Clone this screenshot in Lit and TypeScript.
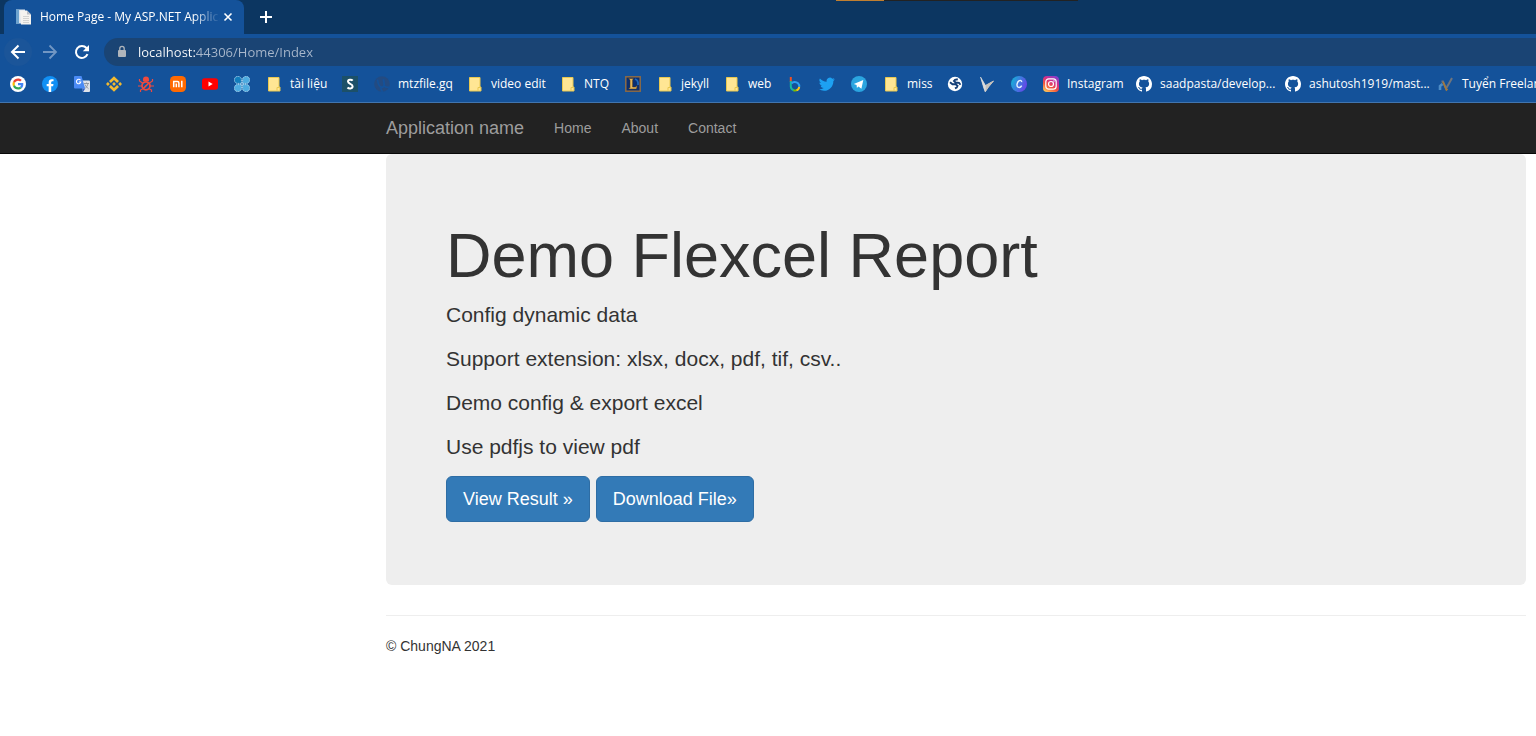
import { LitElement, html, css, svg, nothing, type TemplateResult } from "lit";
import { customElement } from "lit/decorators.js";
import { styleMap } from "lit/directives/style-map.js";

const icon = (body: TemplateResult, box = "0 0 16 16") =>
  html`<svg class="icon" viewBox=${box} aria-hidden="true">${body}</svg>`;

const folder = icon(svg`
  <path d="M2.500 1.500h10.500v9.500h1v4H2.500z" fill="#ffe694" stroke="#e9c850"/>
  <path d="M11 14.500v-3h2.500" fill="none" stroke="#e9c850"/>`);

const github = icon(svg`<path fill="#fff" fill-rule="evenodd" d="M8 0C3.580 0 0 3.580 0 8c0 3.540 2.290 6.530 5.470 7.590.4.070.55-.17.55-.38 0-.19-.01-.82-.01-1.490-2.010.37-2.530-.49-2.690-.94-.09-.23-.48-.94-.82-1.130-.28-.15-.68-.52-.01-.53.63-.01 1.080.58 1.230.82.72 1.210 1.870.87 2.330.66.070-.52.28-.87.51-1.070-1.780-.2-3.640-.89-3.640-3.950 0-.87.31-1.590.82-2.150-.08-.2-.36-1.020.08-2.120 0 0 .67-.21 2.200.82.64-.18 1.320-.27 2-.27s1.360.09 2 .27c1.530-1.040 2.200-.82 2.200-.82.44 1.100.16 1.920.08 2.120.51.56.82 1.270.82 2.150 0 3.070-1.870 3.750-3.650 3.950.29.25.54.73.54 1.480 0 1.070-.01 1.930-.01 2.200 0 .21.15.46.55.38A8.010 8.010 0 0 0 16 8c0-4.420-3.580-8-8-8z"/>`);

const google = icon(svg`
  <circle cx="24" cy="24" r="24" fill="#fff"/>
  <g transform="translate(7.500 7.500) scale(.69)">
    <path fill="#EA4335" d="M24 9.500c3.540 0 6.710 1.220 9.210 3.600l6.850-6.850C35.900 2.380 30.470 0 24 0 14.620 0 6.510 5.380 2.560 13.220l7.980 6.190C12.430 13.720 17.740 9.500 24 9.500z"/>
    <path fill="#4285F4" d="M46.980 24.550c0-1.570-.15-3.090-.38-4.550H24v9.020h12.940c-.58 2.960-2.260 5.480-4.780 7.180l7.730 6c4.510-4.180 7.090-10.360 7.090-17.650z"/>
    <path fill="#FBBC05" d="M10.530 28.590c-.48-1.450-.76-2.990-.76-4.590s.27-3.140.76-4.590l-7.980-6.190C.92 16.460 0 20.120 0 24s.92 7.540 2.560 10.780z"/>
    <path fill="#34A853" d="M24 48c6.480 0 11.930-2.130 15.890-5.810l-7.730-6c-2.150 1.450-4.920 2.300-8.160 2.300-6.260 0-11.570-4.220-13.470-9.910l-7.980 6.190C6.510 42.620 14.620 48 24 48z"/>
  </g>`, "0 0 48 48");

const facebook = icon(svg`
  <circle cx="12" cy="12" r="12" fill="#1190f5"/>
  <path fill="#fff" d="M16.700 15.500l.5-3.500h-3.400V9.800c0-.9.500-1.900 2-1.900h1.500v-3s-1.400-.2-2.700-.2c-2.800 0-4.600 1.700-4.600 4.700V12H7v3.500h3V24h3.800v-8.500z"/>`, "0 0 24 24");

const translate = icon(svg`
  <path d="M6.500 4.500H15a1 1 0 0 1 1 1V15a1 1 0 0 1-1 1H9z" fill="#dfe3ea"/>
  <path d="M1 0h6.500l3.700 12.500H1a1 1 0 0 1-1-1V1a1 1 0 0 1 1-1z" fill="#4b8bf5"/>
  <path d="M8 12.500h3.200L9.200 16z" fill="#2f5fc4"/>
  <path d="M6.500 4.300A2.200 2.200 0 1 0 6.800 6H4.800" fill="none" stroke="#fff" stroke-width="1.100"/>
  <path d="M10 7.500h5M12.500 6.500v1M14 7.500c-.4 2-1.600 3.800-3 5M11 8.500c.8 1.900 2 3.200 3.500 4.200" fill="none" stroke="#8b929b" stroke-width=".9"/>`);

const binance = icon(svg`<g fill="#f3ba2f">
  <path d="M8 .2l5 4.900-1.900 1.900L8 3.900 4.900 7 3 5.100z"/>
  <path d="M8 15.800l5-4.900-1.900-1.900L8 12.100 4.900 9 3 10.900z"/>
  <path d="M8 6.100L9.900 8 8 9.900 6.100 8zM1.900 6.100L3.800 8 1.900 9.900 0 8zM14.100 6.100L16 8l-1.900 1.900L12.200 8z"/></g>`);

const bug = icon(svg`
  <path d="M5 3.500a3 3 0 0 1 6 0V5H5z" fill="#f04a3e"/>
  <circle cx="8" cy="9.800" r="4" fill="none" stroke="#f04a3e" stroke-width="1.700"/>
  <path d="M5.200 12.600l5.600-5.600" stroke="#f04a3e" stroke-width="1.700"/>
  <path d="M4.500 7L1.500 5V3M11.500 7l3-2V3M4 10H0M12 10h4M4.800 12.700L2.500 14v2M11.200 12.700l2.300 1.300v2" fill="none" stroke="#f04a3e" stroke-width="1.200"/>`);

const xiaomi = icon(svg`
  <rect width="16" height="16" rx="4.500" fill="#ff6900"/>
  <path d="M3.700 11.300V5.500h3.800a1.400 1.400 0 0 1 1.400 1.400v4.400M6.300 7.500v3.800M11.800 4.800v6.500" fill="none" stroke="#fff" stroke-width="1.500"/>`);

const youtube = icon(svg`
  <rect y="2.300" width="16" height="11.400" rx="2.600" fill="#f00"/>
  <path d="M6.500 5.500v5l4.200-2.500z" fill="#fff"/>`);

const clover = icon(svg`<g stroke="#b9e2f7" stroke-width=".8" stroke-dasharray="1.500 .5">
  <path d="M7.400 7.400H3.500a3 3 0 0 1-3-3V3.500a3 3 0 0 1 3-3h1a3 3 0 0 1 2.900 3z" fill="#117cbc"/>
  <path d="M8.600 7.400h3.900a3 3 0 0 0 3-3V3.500a3 3 0 0 0-3-3h-1a3 3 0 0 0-2.900 3z" fill="#4dabe0"/>
  <path d="M7.400 8.600H3.500a3 3 0 0 0-3 3v.9a3 3 0 0 0 3 3h1a3 3 0 0 0 2.900-3z" fill="#4dabe0"/>
  <path d="M8.600 8.600h3.900a3 3 0 0 1 3 3v.9a3 3 0 0 1-3 3h-1a3 3 0 0 1-2.900-3z" fill="#4dabe0"/></g>`);

const sBadge = icon(svg`
  <rect width="16" height="16" fill="#1c5068"/>
  <path d="M10.700 4.700C9.600 3.400 6 3.300 6 5.600c0 2.400 4.600 2 4.600 4.700 0 2.700-3.800 2.600-5.100 1.200" fill="none" stroke="#fff" stroke-width="2"/>`);

const torrent = icon(svg`
  <circle cx="8" cy="8" r="7.800" fill="#234b82"/>
  <path d="M3.500 3.500c.5 4.500 1.700 7.700 4.500 7.700 2.600 0 2.500-3.500 1.300-8M10.500 10.200c1.200 1.200 2.500 1.500 4.500.8M6.500 11.500c.5 1.500 1 3 2 4.500" fill="none" stroke="#14529a" stroke-width="1.800"/>`);

const league = icon(svg`
  <rect x=".8" y=".8" width="14.400" height="14.400" fill="#092f73" stroke="#8d6b46" stroke-width="1.500"/>
  <path d="M10 3c2.500 1 3.400 3 3 6" fill="none" stroke="#1c67bd" stroke-width="1.800"/>
  <path d="M3.500 2.500h5L7.600 4v7h2.800l1.800-1.500-.7 3.500H3.500L5 11.500V4z" fill="#e3b75b" stroke="#4f3515" stroke-width=".5"/>`);

const bing = icon(svg`<g fill="none" stroke-width="2">
  <path d="M3.800 1v5" stroke="#f25022"/>
  <path d="M3.800 5v5.500a4.200 4.200 0 0 0 3 3.800" stroke="#18b6a0"/>
  <path d="M4.500 7.500C6 5.500 9 5.300 11 7.200c1 1 1.400 2.300 1.200 3.600" stroke="#2e9df0"/>
  <path d="M6.500 14.200c1.500.6 2.500.4 3.400 0" stroke="#7fba00"/>
  <path d="M9.500 14.300c1.500-.5 2.500-1.800 2.700-3.500" stroke="#ffc515"/></g>`);

const twitter = icon(svg`<path fill="#1da1f2" d="M23.600 4.900c-.9.400-1.800.7-2.800.8 1-.6 1.800-1.600 2.200-2.700-1 .6-2 1-3.100 1.200a4.900 4.900 0 0 0-8.400 4.500C7.400 8.500 3.800 6.500 1.400 3.600a4.900 4.900 0 0 0 1.500 6.600c-.8 0-1.600-.2-2.200-.6v.1c0 2.400 1.700 4.400 3.900 4.800-.7.200-1.500.2-2.200.1.600 2 2.400 3.400 4.600 3.400A9.900 9.900 0 0 1 0 20a13.900 13.900 0 0 0 7.500 2.200c9.100 0 14.300-7.700 14-14.600.9-.7 1.700-1.600 2.100-2.700z"/>`, "0 0 24 24");

const telegram = icon(svg`
  <circle cx="8" cy="8" r="8" fill="#2ba5e0"/>
  <path d="M2.800 8L12.300 4l-1.900 8.700-3-2.300-1.500 1.500-.3-2.800z" fill="#fff"/>`);

const globe = icon(svg`
  <circle cx="8" cy="8" r="7.200" fill="#fff"/>
  <path d="M3 6.300l2.500 2h3l2 1.500-.8 1.700-1.700.8M10.800 3.300L8 3.800 7 5l1.500 1.500 3.500.3 1.500 2" fill="none" stroke="#143f78" stroke-width="1.900"/>`);

const swallow = icon(svg`
  <path d="M1.500 1l5 8.500 8-4.500-4.500 5-3.500 6L5 13z" fill="#ccc"/>
  <path d="M6.500 9.500l8-4.500-5 6-3.200 4.500z" fill="#c6c2bd" stroke="#c6c2bd"/>
  <path d="M1.500 1l5 8.500-.3 6L4.800 12z" fill="#dcdcdc" stroke="#dcdcdc" stroke-width=".6"/>`);

const canva = icon(svg`
  <defs><linearGradient id="cv" x1="0" y1=".3" x2="1" y2=".7"><stop stop-color="#15b0d8"/><stop offset="1" stop-color="#6d3de8"/></linearGradient></defs>
  <circle cx="8" cy="8" r="8" fill="url(#cv)"/>
  <path d="M10.600 6.200c.3-1.700-1.300-2.300-2.700-1.300-2 1.400-2.700 5.100-.8 6.200 1.300.7 2.900-.2 3.600-1.500" fill="none" stroke="#e4f2ff" stroke-width="1.400"/>`);

const instagram = icon(svg`
  <defs><linearGradient id="ig" x1=".2" y1="1" x2=".8" y2="0"><stop stop-color="#fdc657"/><stop offset=".35" stop-color="#f4543d"/><stop offset=".65" stop-color="#d12f8d"/><stop offset="1" stop-color="#7d3fd0"/></linearGradient></defs>
  <rect width="16" height="16" rx="4" fill="url(#ig)"/>
  <g fill="none" stroke="#fff" stroke-width="1.200"><rect x="2.800" y="2.800" width="10.400" height="10.400" rx="3"/><circle cx="8" cy="8" r="2.500"/></g>
  <circle cx="11" cy="5" r=".7" fill="#fff"/>`);

const freelance = icon(svg`<g fill="none">
  <path d="M2 14v-4l2.500-2" stroke="#4d8cc6" stroke-width="2.600"/>
  <path d="M3.500 5.500h1.500l3 7 3-5 3-5.500" stroke="#70757d" stroke-width="2"/>
  <path d="M5 6l3.500 8 1.200-1" stroke="#a4793a" stroke-width="1.600"/></g>`);

interface Bookmark { name: string; glyph: TemplateResult; label?: string; width: number; }

const bookmarks: Bookmark[] = [
  { name: "Google", glyph: google, width: 32 },
  { name: "Facebook", glyph: facebook, width: 32 },
  { name: "Translate", glyph: translate, width: 32 },
  { name: "Binance", glyph: binance, width: 32 },
  { name: "Bug tracker", glyph: bug, width: 32 },
  { name: "Xiaomi", glyph: xiaomi, width: 32 },
  { name: "YouTube", glyph: youtube, width: 32 },
  { name: "Clover", glyph: clover, width: 32 },
  { name: "tài liệu", glyph: folder, label: "tài liệu", width: 76 },
  { name: "S", glyph: sBadge, width: 32 },
  { name: "mtzfile.gq", glyph: torrent, label: "mtzfile.gq", width: 93 },
  { name: "video edit", glyph: folder, label: "video edit", width: 93 },
  { name: "NTQ", glyph: folder, label: "NTQ", width: 65 },
  { name: "League of Legends", glyph: league, width: 32 },
  { name: "jekyll", glyph: folder, label: "jekyll", width: 67 },
  { name: "web", glyph: folder, label: "web", width: 63 },
  { name: "Bing", glyph: bing, width: 32 },
  { name: "Twitter", glyph: twitter, width: 32 },
  { name: "Telegram", glyph: telegram, width: 32 },
  { name: "miss", glyph: folder, label: "miss", width: 64 },
  { name: "Globe", glyph: globe, width: 32 },
  { name: "Swallow", glyph: swallow, width: 32 },
  { name: "Canva", glyph: canva, width: 32 },
  { name: "Instagram", glyph: instagram, label: "Instagram", width: 93 },
  { name: "saadpasta", glyph: github, label: "saadpasta/develop...", width: 149 },
  { name: "ashutosh1919", glyph: github, label: "ashutosh1919/mast...", width: 153 },
  { name: "Freelancer", glyph: freelance, label: "Tuyển Freelancer", width: 132 },
];

@customElement("browser-chrome")
export class BrowserChrome extends LitElement {
  static styles = css`
    :host { display: block; font-family: "Open Sans", "Noto Sans", sans-serif; color: #fff; background: #14529a; border-bottom: 1px solid #4275ae; }
    * { box-sizing: border-box; }
    button { border: 0; padding: 0; margin: 0; background: none; color: inherit; display: grid; place-items: center; }
    .icon { width: 16px; height: 16px; flex: none; display: block; }
    .strip { position: relative; height: 34px; background: #0c3661; display: flex; padding-left: 4px; }
    .meter { position: absolute; top: 0; left: 836px; width: 242px; height: 1px; background: linear-gradient(90deg, #c17f30 48px, #222 48px); }
    .tab { width: 240px; display: flex; align-items: center; padding: 0 8px 0 12px; background: #14529a; border-radius: 8px 8px 0 0; }
    .title { flex: 1; margin-left: 8px; font-size: 12px; line-height: 16px; white-space: nowrap; overflow: hidden;
      mask-image: linear-gradient(90deg, #000 85%, transparent); }
    .close { width: 16px; height: 16px; }
    .close svg { width: 10px; height: 10px; }
    .add { width: 28px; height: 34px; margin-left: 8px; }
    .add svg { width: 12px; height: 12px; }
    .bar { height: 34px; display: flex; align-items: center; padding: 4px 0 2px 4px; }
    .nav { width: 28px; height: 28px; border-radius: 50%; margin-right: 4px; }
    .back { background: #1b5599; }
    .nav svg { width: 16px; height: 16px; }
    .omnibox { flex: 1; height: 28px; margin-left: 4px; border-radius: 14px 0 0 14px; background: #1a4474; display: flex; align-items: center; padding-left: 12px; }
    .omnibox svg { width: 12px; height: 16px; flex: none; }
    .url { flex: 1; border: 0; outline: 0; margin: 0 0 0 10px; padding: 0; height: 20px; font: 13px/20px "Open Sans", "Noto Sans", sans-serif;
      background: linear-gradient(90deg, #fff 58px, #a9b8cc 58px); background-clip: text; -webkit-background-clip: text; color: transparent; }
    .marks { height: 34px; display: flex; align-items: center; padding: 0 0 2px 2px; overflow: hidden; }
    .mark { flex: none; height: 28px; display: flex; align-items: center; gap: 8px; padding-left: 8px; color: #fff; text-decoration: none; font-size: 12px; white-space: nowrap; }
  `;

  render() {
    return html`
      <div class="strip">
        <div class="tab">
          ${icon(svg`
            <path d="M0 .5h9v14H0z" fill="#dbe5ef"/><path d="M0 .5h3v14H0z" fill="#6da3cf"/>
            <path d="M4 1.500h7l4 4V15.500H5z" fill="#f5f3ef"/><path d="M11 1.500v4h4z" fill="#b8bdc5"/>
            <path d="M7 7.500h6M7 9.500h6M7 11.500h6M7 13.500h6" stroke="#c4c4c4" stroke-width=".7"/>`)}
          <span class="title">Home Page - My ASP.NET Application</span>
          <button class="close" aria-label="Close tab"><svg viewBox="0 0 10 10"><path d="M1.500 1.500l7 7M8.500 1.500l-7 7" stroke="#fff" stroke-width="1.600"/></svg></button>
        </div>
        <button class="add" aria-label="New tab"><svg viewBox="0 0 12 12"><path d="M6 0v12M0 6h12" stroke="#fff" stroke-width="2"/></svg></button>
        <div class="meter"></div>
      </div>
      <div class="bar">
        <button class="nav back" aria-label="Back"><svg viewBox="0 0 16 16"><path d="M15 8H2.500M8.500 1.500L2 8l6.500 6.500" fill="none" stroke="#fff" stroke-width="2"/></svg></button>
        <button class="nav" aria-label="Forward"><svg viewBox="0 0 16 16"><path d="M1 8h12.500M7.500 1.500L14 8l-6.500 6.500" fill="none" stroke="#7196c3" stroke-width="1.800"/></svg></button>
        <button class="nav" aria-label="Reload"><svg viewBox="0 0 16 16"><path d="M13.500 10.200A6 6 0 1 1 12.500 4l1.500 1.500" fill="none" stroke="#fff" stroke-width="2"/><path d="M15 1v6.200H8.800z" fill="#fff"/></svg></button>
        <div class="omnibox">
          <svg viewBox="0 0 12 16" aria-hidden="true"><rect x="2" y="6" width="8" height="7" rx="1" fill="#b0b5bb"/><path d="M3.800 6V4.500a2.200 2.200 0 0 1 4.400 0V6" fill="none" stroke="#b0b5bb" stroke-width="1.300"/></svg>
          <input class="url" type="text" aria-label="Address" .value=${"localhost:44306/Home/Index"} spellcheck="false">
        </div>
      </div>
      <nav class="marks" aria-label="Bookmarks">
        ${bookmarks.map((b) => html`<a class="mark" href="#" aria-label=${b.name} style=${styleMap({ width: `${b.width}px` })}>${b.glyph}${b.label ? html`<span>${b.label}</span>` : nothing}</a>`)}
      </nav>`;
  }
}

@customElement("app-root")
export class AppRoot extends LitElement {
  static styles = css`
    :host { display: block; min-height: 100vh; overflow: hidden; background: #fff; color: #333; font: 14px/20px "Liberation Sans", Arial, sans-serif; }
    * { box-sizing: border-box; }
    .container { margin: 0 10px 0 386px; }
    .navbar { background: #222; border-bottom: 1px solid #080808; }
    .menu { display: flex; align-items: center; height: 50px; gap: 30px; }
    .menu a { color: #9d9d9d; text-decoration: none; }
    .menu .brand { font-size: 18px; }
    .jumbotron { background: #eee; border-radius: 6px; padding: 47px 60px 63px; }
    h1 { margin: 20px 0 10px; font-size: 63px; line-height: 69px; font-weight: 400; }
    p { margin: 0 0 15px; font-size: 21px; line-height: 29px; }
    .actions { display: flex; gap: 6px; }
    .btn { border: 1px solid #2e6da4; border-radius: 6px; background: #337ab7; color: #fff; padding: 10px 16px; font: 18px/24px "Liberation Sans", Arial, sans-serif; }
    footer { margin-top: 30px; padding-top: 20px; border-top: 1px solid #eee; }
  `;

  render() {
    return html`
      <browser-chrome></browser-chrome>
      <header class="navbar">
        <nav class="container menu">
          <a class="brand" href="#">Application name</a>
          <a href="#">Home</a>
          <a href="#">About</a>
          <a href="#">Contact</a>
        </nav>
      </header>
      <main class="container">
        <section class="jumbotron">
          <h1>Demo Flexcel Report</h1>
          <p>Config dynamic data</p>
          <p>Support extension: xlsx, docx, pdf, tif, csv..</p>
          <p>Demo config &amp; export excel</p>
          <p>Use pdfjs to view pdf</p>
          <div class="actions">
            <button class="btn">View Result »</button>
            <button class="btn">Download File»</button>
          </div>
        </section>
        <footer>© ChungNA 2021</footer>
      </main>`;
  }
}
